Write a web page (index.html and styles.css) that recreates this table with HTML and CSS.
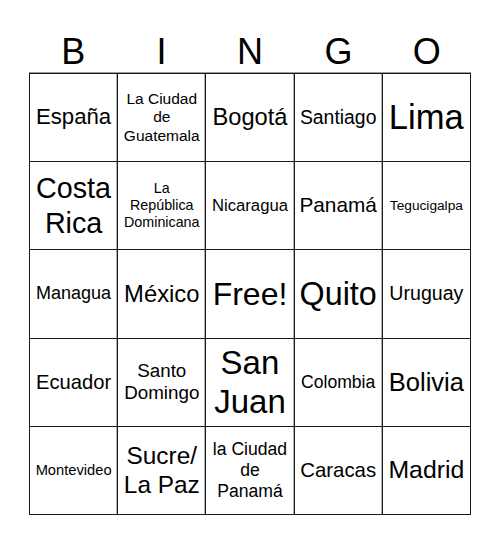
FILE: index.html
```html
<!DOCTYPE html>
<html>
<head>
<meta charset="utf-8">
<link rel="stylesheet" href="styles.css">
</head>
<body>
<div class="card">
  <div class="head">
    <span>B</span><span>I</span><span>N</span><span>G</span><span>O</span>
  </div>
  <div class="grid">
    <div class="cell f22">España</div>
    <div class="cell f155">La Ciudad<br>de<br>Guatemala</div>
    <div class="cell f237">Bogotá</div>
    <div class="cell f194">Santiago</div>
    <div class="cell f35">Lima</div>

    <div class="cell f29">Costa<br>Rica</div>
    <div class="cell f143">La<br>República<br>Dominicana</div>
    <div class="cell f167">Nicaragua</div>
    <div class="cell f208">Panamá</div>
    <div class="cell f137">Tegucigalpa</div>

    <div class="cell f18">Managua</div>
    <div class="cell f238">México</div>
    <div class="cell f32">Free!</div>
    <div class="cell f323">Quito</div>
    <div class="cell f196">Uruguay</div>

    <div class="cell f202">Ecuador</div>
    <div class="cell f188">Santo<br>Domingo</div>
    <div class="cell f33">San<br>Juan</div>
    <div class="cell f176">Colombia</div>
    <div class="cell f255">Bolivia</div>

    <div class="cell f147">Montevideo</div>
    <div class="cell f244">Sucre/<br>La Paz</div>
    <div class="cell f176">la Ciudad<br>de<br>Panamá</div>
    <div class="cell f204">Caracas</div>
    <div class="cell f248">Madrid</div>
  </div>
</div>
</body>
</html>
```

FILE: styles.css
```css
html, body {
  margin: 0;
  padding: 0;
  background: #fff;
}
body {
  font-family: "Liberation Sans", Arial, sans-serif;
  color: #000;
}
.card {
  width: 442px;
  margin-left: 29px;
  padding-top: 31px;
}
.head {
  display: grid;
  grid-template-columns: repeat(5, 1fr);
  height: 42px;
  font-size: 36px;
  line-height: 42px;
  text-align: center;
}
.grid {
  display: grid;
  grid-template-columns: repeat(5, 88.2px);
  grid-auto-rows: 88.2px;
  border-left: 1px solid #1a1a1a;
  border-top: 1px solid #1a1a1a;
  box-shadow: 0 -1px 0 #999, 0 1px 0 #999;
}
.cell {
  display: flex;
  align-items: center;
  justify-content: center;
  text-align: center;
  border-right: 1px solid #1a1a1a;
  border-bottom: 1px solid #1a1a1a;
  box-shadow: inset -1px 0 0 #b0b0b0;
  line-height: 1.2;
  overflow: hidden;
}
.cell:nth-child(5n) {
  box-shadow: none;
}
.f137 { font-size: 13.7px; }
.f143 { font-size: 14.3px; }
.f147 { font-size: 14.7px; }
.f155 { font-size: 15.5px; }
.f167 { font-size: 16.7px; }
.f176 { font-size: 17.6px; }
.f18 { font-size: 18px; }
.f188 { font-size: 18.8px; }
.f194 { font-size: 19.4px; }
.f196 { font-size: 19.6px; }
.f202 { font-size: 20.2px; }
.f204 { font-size: 20.4px; }
.f208 { font-size: 20.8px; }
.f22 { font-size: 22.2px; }
.f237 { font-size: 23.7px; }
.f238 { font-size: 23.8px; }
.f244 { font-size: 24.4px; }
.f248 { font-size: 24.8px; }
.f255 { font-size: 25.5px; }
.f29 { font-size: 28.7px; }
.f32 { font-size: 32px; }
.f323 { font-size: 32.3px; }
.f33 { font-size: 33px; }
.f35 { font-size: 34.6px; }
```
